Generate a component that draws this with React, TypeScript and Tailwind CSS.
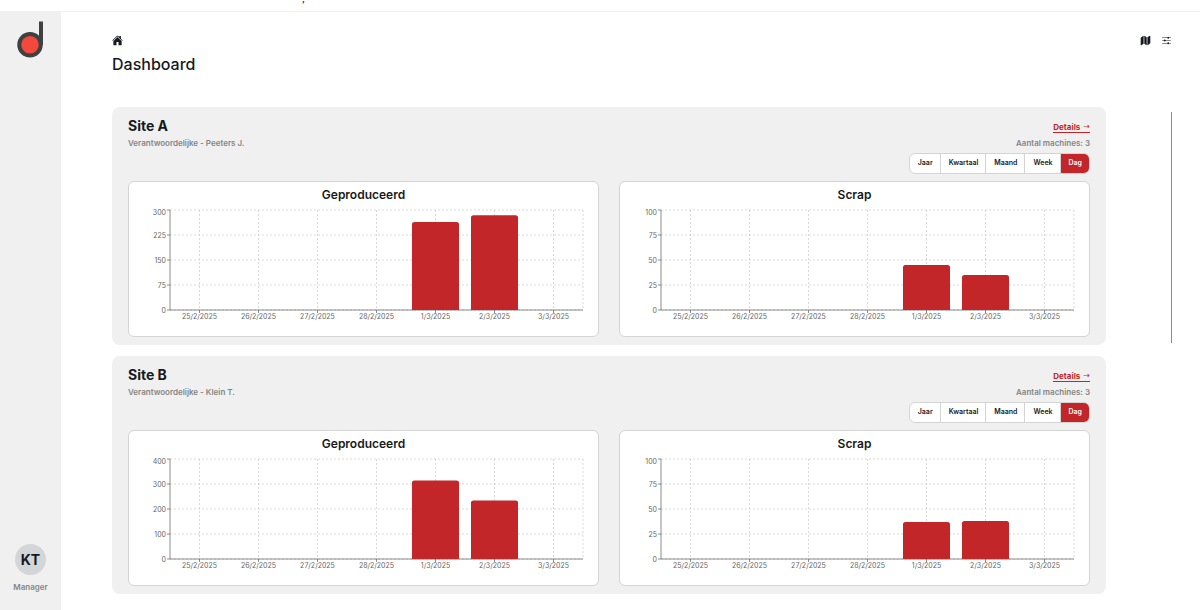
import { useState } from 'react'
import type { ReactNode } from 'react'
import { IoHome, IoMap, IoOptions } from 'react-icons/io5'

type Period = 'Jaar' | 'Kwartaal' | 'Maand' | 'Week' | 'Dag'

interface Chart {
  title: string
  max: number
  values: number[]
}

interface Site {
  id: string
  name: string
  manager: string
  machines: number
  charts: Chart[]
}

const PERIODS: Period[] = ['Jaar', 'Kwartaal', 'Maand', 'Week', 'Dag']

const DAYS = ['25/2/2025', '26/2/2025', '27/2/2025', '28/2/2025', '1/3/2025', '2/3/2025', '3/3/2025']

const SITES: Site[] = [
  {
    id: 'a',
    name: 'Site A',
    manager: 'Peeters J.',
    machines: 3,
    charts: [
      { title: 'Geproduceerd', max: 300, values: [0, 0, 0, 0, 264, 284, 0] },
      { title: 'Scrap', max: 100, values: [0, 0, 0, 0, 45, 35, 0] },
    ],
  },
  {
    id: 'b',
    name: 'Site B',
    manager: 'Klein T.',
    machines: 3,
    charts: [
      { title: 'Geproduceerd', max: 400, values: [0, 0, 0, 0, 314, 234, 0] },
      { title: 'Scrap', max: 100, values: [0, 0, 0, 0, 37, 38, 0] },
    ],
  },
]

const PLOT_HEIGHT = 100

// x positions are percentages, so the plot follows the width of its card
function BarChart({ chart }: { chart: Chart }) {
  const slot = 100 / DAYS.length
  const ticks = [0, 1, 2, 3, 4].map(i => ({
    value: (chart.max / 4) * i,
    y: PLOT_HEIGHT - (PLOT_HEIGHT / 4) * i,
  }))

  return (
    <svg width="100%" height={PLOT_HEIGHT} className="block overflow-visible" role="img" aria-label={chart.title}>
      <g stroke="#cccccc" strokeDasharray="2 2" strokeWidth="0.75">
        {ticks.map(t => <line key={t.value} x1="0" x2="100%" y1={t.y} y2={t.y} />)}
        {DAYS.map((day, i) => {
          const x = `${slot * (i + 0.5)}%`
          return <line key={day} x1={x} x2={x} y1="0" y2={PLOT_HEIGHT} />
        })}
        <line x1="100%" x2="100%" y1="0" y2={PLOT_HEIGHT} />
      </g>

      {/* Axes */}
      <g stroke="#666666" strokeWidth="0.75">
        <line x1="0" x2="0" y1="0" y2={PLOT_HEIGHT} />
        <line x1="0" x2="100%" y1={PLOT_HEIGHT} y2={PLOT_HEIGHT} />
        {ticks.map(t => <line key={t.value} x1="-3" x2="0" y1={t.y} y2={t.y} />)}
        {DAYS.map((day, i) => {
          const x = `${slot * (i + 0.5)}%`
          return <line key={day} x1={x} x2={x} y1={PLOT_HEIGHT} y2={PLOT_HEIGHT + 3} />
        })}
      </g>

      {/* Bars */}
      {chart.values.map((value, i) => {
        const height = (value / chart.max) * PLOT_HEIGHT
        if (height === 0) return null
        return (
          <svg key={DAYS[i]} x={`${slot * (i + 0.1)}%`} y="0" width={`${slot * 0.8}%`} height={PLOT_HEIGHT}>
            <rect y={PLOT_HEIGHT - height} width="100%" height={height + 4} rx="2.5" fill="#c22628" />
          </svg>
        )
      })}

      {/* Labels */}
      <g fill="#666666" className="text-[7px]">
        {ticks.map(t => (
          <text key={t.value} x="-4" y={t.y === 0 ? 5 : t.y + 3} textAnchor="end">{t.value}</text>
        ))}
        {DAYS.map((day, i) => (
          <text key={day} x={`${slot * (i + 0.5)}%`} y={PLOT_HEIGHT + 9} textAnchor="middle">{day}</text>
        ))}
      </g>
    </svg>
  )
}

function PeriodPicker({ value, onChange }: { value: Period; onChange: (p: Period) => void }) {
  return (
    <div className="flex h-[21px] divide-x divide-[#d4d4d4] overflow-hidden rounded-md border border-[#d4d4d4] bg-white">
      {PERIODS.map(p => (
        <button
          key={p}
          type="button"
          onClick={() => onChange(p)}
          className={[
            'pr-[7px] pl-2 text-[7px] font-semibold',
            p === value ? 'bg-[#c22628] text-white' : 'text-[#16191d]',
          ].join(' ')}
        >
          {p}
        </button>
      ))}
    </div>
  )
}

function SitePanel({ site }: { site: Site }) {
  const [period, setPeriod] = useState<Period>('Dag')

  return (
    <section className="rounded-lg bg-[#f0f0f0] px-4 py-2">
      <div className="flex justify-between">
        <div>
          <h2 className="text-[14px] leading-[22px] font-bold">{site.name}</h2>
          <p className="text-[8px] leading-[12px] font-semibold text-[#868686]">Verantwoordelijke - {site.manager}</p>
        </div>
        <div className="flex flex-col items-end pt-[7px]">
          <a href="#details" className="flex h-[11px] items-center gap-[3px] border-b border-[#c22628] text-[8px] leading-[10px] font-bold text-[#c22628]">
            Details <span className="font-['DejaVu_Sans',sans-serif] font-normal">→</span>
          </a>
          <p className="my-1 text-[8px] leading-[12px] font-semibold text-[#868686]">Aantal machines: {site.machines}</p>
          <PeriodPicker value={period} onChange={setPeriod} />
        </div>
      </div>
      <div className="mt-[7px] grid grid-cols-2 gap-5">
        {site.charts.map(chart => (
          <div key={chart.title} className="rounded-md border border-[#d4d4d4] bg-white pt-1 pb-[26px]">
            <h3 className="mb-[6px] text-center text-[12px] leading-[18px] font-semibold">{chart.title}</h3>
            <div className="pr-[15px] pl-[41px]">
              <BarChart chart={chart} />
            </div>
          </div>
        ))}
      </div>
    </section>
  )
}

function IconButton({ label, children }: { label: string; children: ReactNode }) {
  return (
    <button type="button" aria-label={label} className="flex size-[11px] items-center justify-center">
      {children}
    </button>
  )
}

function Sidebar() {
  return (
    <aside className="flex w-[61px] shrink-0 flex-col items-center justify-between bg-[#f0f0f0] pt-[9px] pb-[17px]">
      <svg width="28" height="38" viewBox="0 0 28 38" aria-label="Logo">
        <circle cx="13" cy="23.75" r="10.75" fill="#f4483c" stroke="#3e4142" strokeWidth="4" />
        <path d="M24 0.5V24" stroke="#3e4142" strokeWidth="4" />
      </svg>
      <div className="flex flex-col items-center">
        <div className="flex size-[31px] items-center justify-center rounded-full bg-[#d3d5d7] text-[14px] font-bold">KT</div>
        <p className="mt-[6px] text-[8px] leading-[12px] font-semibold text-[#868686]">Manager</p>
      </div>
    </aside>
  )
}

export default function App() {
  return (
    <div className="flex min-h-screen flex-col bg-white font-['Inter',sans-serif] text-[#16191d]">
      <header className="h-3 shrink-0 border-b border-[#f0f0f0] pl-[302px]">
        <p className="text-[8px] leading-[8px] font-bold">’</p>
      </header>
      <div className="flex flex-1">
        <Sidebar />
        <main className="flex-1 pt-[23px] pr-7 pb-[14px] pl-[51px]">
          <div className="flex justify-between">
            <a href="#home" aria-label="Home"><IoHome size={11} /></a>
            <div className="flex gap-[10px]">
              <IconButton label="Kaart"><IoMap size={11} /></IconButton>
              <IconButton label="Instellingen"><IoOptions size={11} /></IconButton>
            </div>
          </div>
          <h1 className="mt-2 text-[16px] leading-[21px] font-medium">Dashboard</h1>
          <div className="mt-8 flex gap-[65px]">
            <div className="flex flex-1 flex-col gap-[11px]">
              {SITES.map(site => <SitePanel key={site.id} site={site} />)}
            </div>
            <div className="mt-[5px] h-[231px] w-px bg-[#8c8c8c]" />
          </div>
        </main>
      </div>
    </div>
  )
}
